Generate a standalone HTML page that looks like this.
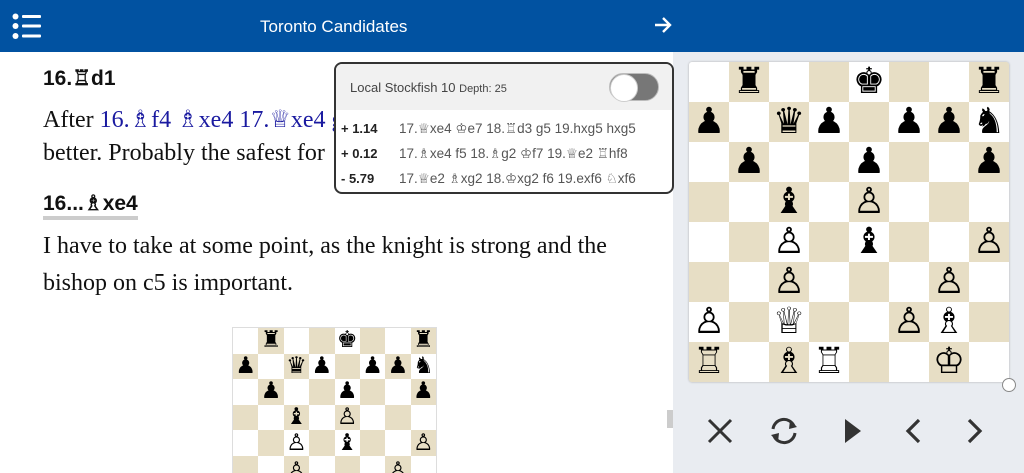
<!DOCTYPE html>
<html style="width:1024px;height:473px;overflow:hidden"><head><meta charset="utf-8"><style>
*{margin:0;padding:0;box-sizing:border-box}
body{width:1024px;height:473px;overflow:hidden;background:#fff;position:relative;font-family:"Liberation Sans",sans-serif}
.hdr{position:absolute;left:0;top:0;width:1024px;height:52px;background:#0152a1}
.hdr .t{position:absolute;left:260px;top:17px;color:#fff;font-size:17px}
.right{position:absolute;left:673px;top:52px;width:351px;height:421px;background:#e9ecf1}
.serif{font-family:"Liberation Serif",serif;font-size:24px;color:#111;position:absolute;left:43px;white-space:nowrap}
.blue{color:#1a1aa0}
h2{position:absolute;left:43px;font-size:21px;font-weight:bold;color:#111}
.board{position:absolute;display:grid;grid-template-columns:repeat(8,1fr);overflow:hidden}
.board div{display:flex;align-items:center;justify-content:center;font-family:"DejaVu Sans",sans-serif;color:#000;line-height:1;overflow:hidden}
.l{background:#fff}.d{background:#e7dec5}
.eng{position:absolute;left:334px;top:62px;width:340px;height:132px;border:2px solid #333;border-radius:8px;background:#fff;overflow:hidden}
.eng .h{height:46px;background:#f1f1f1;font-size:13px;color:#444;padding:16px 0 0 14px}
.eng .row{font-size:13.5px;color:#555;height:25px;padding-top:5px;position:relative;white-space:nowrap}
.eng .row b{position:absolute;left:5px;color:#222;font-size:13px}
.eng .row span{position:absolute;left:63px}
.tog{position:absolute;right:13px;top:9px;width:50px;height:28px;border-radius:14px;background:#777;border:1px solid #bbb}
.tog:before{content:"";position:absolute;left:0;top:0;width:26px;height:26px;border-radius:50%;background:#fff;border:1px solid #ccc}
#b2 div:nth-child(n+41){align-items:flex-start;padding-top:4px}
</style></head><body>
<div class="hdr">
<svg style="position:absolute;left:12px;top:13px" width="30" height="28"><g fill="#fff"><circle cx="3.5" cy="3.5" r="3"/><circle cx="3.5" cy="13" r="3"/><circle cx="3.5" cy="23" r="3"/><rect x="10" y="2" width="19" height="3" rx="1"/><rect x="10" y="11.5" width="19" height="3" rx="1"/><rect x="10" y="21.5" width="19" height="3" rx="1"/></g></svg>
<div class="t">Toronto Candidates</div>
<svg style="position:absolute;left:653px;top:15px" width="20" height="20"><path d="M2 10H17M10 3L17 10L10 17" stroke="#fff" stroke-width="2.4" fill="none"/></svg>
</div>
<div class="right"></div>
<h2 style="top:66px">16.♖d1</h2>
<div class="serif" style="top:105px">After <span class="blue">16.♗f4 ♗xe4 17.♕xe4 g5</span></div>
<div class="serif" style="top:140px">better. Probably the safest for</div>
<h2 style="top:192px;border-bottom:4px solid #ccc;line-height:24px">16...♗xe4</h2>
<div class="serif" style="top:233px">I have to take at some point, as the knight is strong and the</div>
<div class="serif" style="top:270px">bishop on c5 is important.</div>
<div style="position:absolute;left:667px;top:410px;width:6px;height:18px;background:#ccc"></div>
<div class="eng">
<div class="h">Local Stockfish 10 <span style="font-size:11px">Depth: 25</span><div class="tog"></div></div>
<div class="row" style="margin-top:6px"><b>+ 1.14</b><span>17.♕xe4 ♔e7 18.♖d3 g5 19.hxg5 hxg5</span></div>
<div class="row"><b>+ 0.12</b><span>17.♗xe4 f5 18.♗g2 ♔f7 19.♕e2 ♖hf8</span></div>
<div class="row"><b>- 5.79</b><span>17.♕e2 ♗xg2 18.♔xg2 f6 19.exf6 ♘xf6</span></div>
</div>
<div class="board" id="b1" style="left:689px;top:62px;width:320px;height:320px;grid-template-rows:repeat(8,40px);font-size:36px;border-radius:3px;box-shadow:0 0 2px #aaa"></div>
<div style="position:absolute;left:1002px;top:378px;width:14px;height:14px;border-radius:50%;background:#fff;border:1px solid #888"></div>
<div class="board" id="b2" style="left:232px;top:327px;width:205px;height:146px;grid-template-rows:repeat(5,25.6px) 18px;font-size:23px;border:1px solid #ddd;border-bottom:0"></div>
<svg style="position:absolute;left:707px;top:418px" width="26" height="26"><path d="M2 2L24 24M24 2L2 24" stroke="#333" stroke-width="3"/></svg>
<svg style="position:absolute;left:767px;top:415px" width="34" height="32"><path d="M6 14A11 11 0 0 1 27 11M28 18A11 11 0 0 1 7 21" stroke="#333" stroke-width="3" fill="none"/><path d="M23 5L30 12L22 14Z M11 27L4 20L12 18Z" fill="#333"/></svg>
<svg style="position:absolute;left:843px;top:418px" width="20" height="26"><path d="M2 1L18 13L2 25Z" fill="#333"/></svg>
<svg style="position:absolute;left:904px;top:418px" width="18" height="26"><path d="M15 2L4 13L15 24" stroke="#333" stroke-width="3.2" fill="none"/></svg>
<svg style="position:absolute;left:966px;top:418px" width="18" height="26"><path d="M3 2L14 13L3 24" stroke="#333" stroke-width="3.2" fill="none"/></svg>
<script>
var pos=["_r__k__r","p_qp_ppn","_p__p__p","__b_P___","__P_b__P","__P___P_","P_Q__PB_","R_BR__K_"];
var m={r:"♜",k:"♚",q:"♛",p:"♟",n:"♞",b:"♝",R:"♖",K:"♔",Q:"♕",P:"♙",N:"♘",B:"♗"};
[["b1",8],["b2",6]].forEach(function(a){var b=document.getElementById(a[0]),h="";
for(var r=0;r<a[1];r++)for(var c=0;c<8;c++){var ch=pos[r][c];h+='<div class="'+((r+c)%2?'d':'l')+'">'+(ch=="_"?"":m[ch])+'</div>';}
b.innerHTML=h;});
</script>
</body></html>
